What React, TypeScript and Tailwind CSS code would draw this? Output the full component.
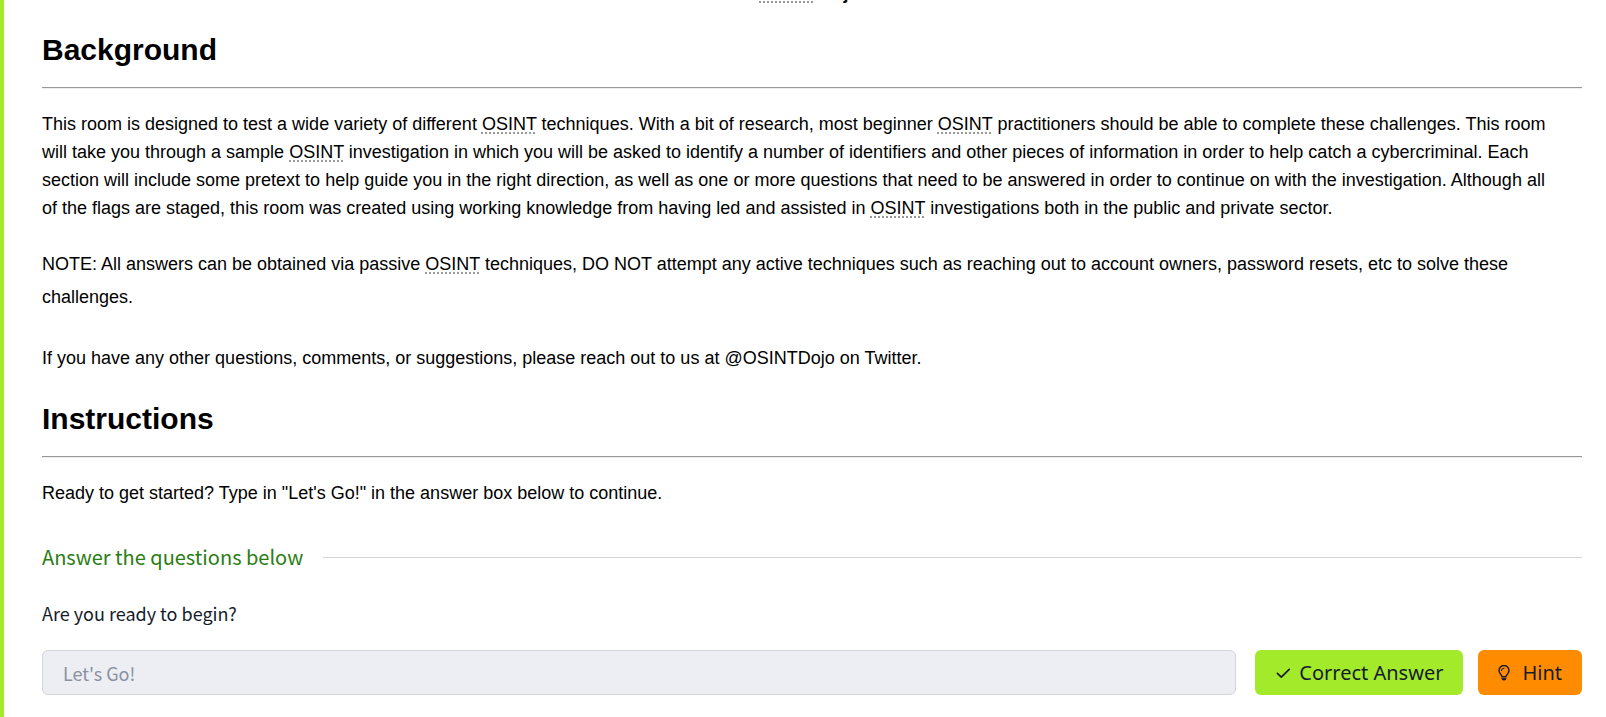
import type { ReactNode } from "react";

function Term() {
  return (
    <abbr
      title="Open-source intelligence"
      className="underline decoration-[#999] decoration-dotted decoration-2 underline-offset-2 [text-decoration-skip-ink:none]"
    >
      OSINT
    </abbr>
  );
}

function SectionTitle({ children }: { children: ReactNode }) {
  return (
    <>
      <h2 className="text-[30px] leading-9 font-bold">{children}</h2>
      <hr className="mt-[19px] mb-[21px] border-t border-b border-t-[#999] border-b-[#eee]" />
    </>
  );
}

function CheckIcon() {
  return (
    <svg width="16" height="16" viewBox="0 0 16 16" fill="none" stroke="currentColor" strokeWidth="1.7" strokeLinecap="round" strokeLinejoin="round" aria-hidden="true">
      <path d="M2.4 8.4 6.3 12.1 14.2 4.4" />
    </svg>
  );
}

function BulbIcon() {
  return (
    <svg width="12" height="16" viewBox="0 0 12 16" fill="none" stroke="currentColor" strokeWidth="1.4" strokeLinecap="round" strokeLinejoin="round" aria-hidden="true">
      <path d="M3.9 11.6C3.7 9.4 1 8.4 1 5.5a5 5 0 0 1 10 0c0 2.9-2.7 3.9-2.9 6.1Z" />
      <path d="M3.4 5.6A2.6 2.6 0 0 1 6 3.1" strokeWidth="1" />
      <path d="M4 13.2h4v.6L7.2 15H4.8L4 13.8Z" fill="currentColor" strokeWidth=".8" />
    </svg>
  );
}

export default function App() {
  return (
    <main className="min-h-screen border-l-4 border-[#a3ea2a] bg-white pr-6 pb-5 pl-[38px] font-['Liberation_Sans',Arial,sans-serif] text-lg text-black">
      <div className="flex h-[3px] items-end justify-center overflow-hidden">
        <p className="leading-5 font-bold">
          <Term /> Dojo&nbsp;
        </p>
      </div>

      <section className="pt-[29px]">
        <SectionTitle>Background</SectionTitle>
        <p className="pr-7 leading-7">
          This room is designed to test a wide variety of different <Term /> techniques. With a bit of research, most
          beginner <Term /> practitioners should be able to complete these challenges. This room will take you through a
          sample <Term /> investigation in which you will be asked to identify a number of identifiers and other pieces
          of information in order to help catch a cybercriminal. Each section will include some pretext to help guide
          you in the right direction, as well as one or more questions that need to be answered in order to continue on
          with the investigation. Although all of the flags are staged, this room was created using working knowledge
          from having led and assisted in <Term /> investigations both in the public and private sector.
        </p>
        <p className="mt-[26px] pr-7 leading-[33px]">
          NOTE: All answers can be obtained via passive <Term /> techniques, DO NOT attempt any active techniques such
          as reaching out to account owners, password resets, etc to solve these challenges.
        </p>
        <p className="mt-7 leading-[33px]">
          If you have any other questions, comments, or suggestions, please reach out to us at @OSINTDojo on Twitter.
        </p>
      </section>

      <section className="pt-[26px]">
        <SectionTitle>Instructions</SectionTitle>
        <p className="leading-7">Ready to get started? Type in "Let's Go!" in the answer box below to continue.</p>
      </section>

      <form className="mt-[34px] font-['Noto_Sans_CJK_SC',sans-serif]" onSubmit={(e) => e.preventDefault()}>
        <div className="flex items-center gap-5">
          <h3 className="text-xl leading-8 text-[#2a7d12]">Answer the questions below</h3>
          <div className="h-px flex-1 bg-[#d3d3d8]" />
        </div>
        <label htmlFor="answer" className="mt-[26px] block text-lg leading-7 text-[#151c2b]">
          Are you ready to begin?
        </label>
        <div className="mt-[23px] flex">
          <input
            id="answer"
            type="text"
            disabled
            value="Let's Go!"
            className="h-[45px] min-w-0 flex-1 rounded-md border border-[#d3d4dc] bg-[#edeef3] px-5 text-lg text-[#8a919f]"
          />
          <button
            type="submit"
            className="ml-[19px] flex h-[45px] items-center gap-2 rounded-md bg-[#a3ea2a] px-5 font-['Noto_Sans',sans-serif] text-xl whitespace-nowrap text-[#151c2b]"
          >
            <CheckIcon />
            Correct Answer
          </button>
          <button
            type="button"
            className="ml-[15px] flex h-[45px] items-center gap-3 rounded-md bg-[#ff8b00] px-5 font-['Noto_Sans',sans-serif] text-xl text-[#151c2b]"
          >
            <BulbIcon />
            Hint
          </button>
        </div>
      </form>
    </main>
  );
}
